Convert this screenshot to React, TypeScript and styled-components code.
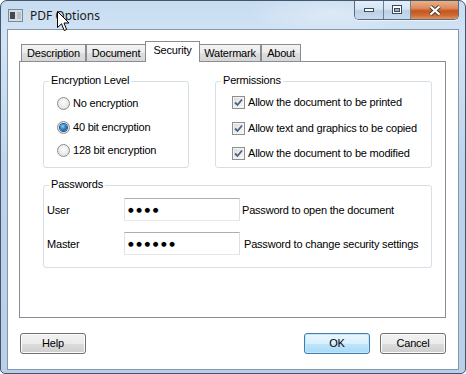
import React from "react";
import styled, { createGlobalStyle } from "styled-components";

const Global = createGlobalStyle`
  html, body { margin: 0; padding: 0; width: 466px; height: 374px; overflow: hidden; background: #ffffff; }
  body { font-family: "Liberation Sans", Arial, sans-serif; font-size: 11px; letter-spacing: -0.2px; color: #000; }
  * { box-sizing: border-box; }
`;

const Window = styled.div`
  position: relative;
  width: 466px;
  height: 374px;
  border: 1px solid #44566a;
  border-radius: 7px 7px 5px 5px;
  background:
    radial-gradient(ellipse 120px 30px at 330px 12px, rgba(255,255,255,0.35), rgba(255,255,255,0) 70%),
    linear-gradient(180deg, #c7dcf1 0%, #d3e4f5 10%, #bcd3eb 45%, #b9d0e8 100%);
  padding: 0 6px 3px 6px;
  display: flex;
  flex-direction: column;
  overflow: hidden;
`;

const TitleBar = styled.div`
  height: 28px;
  display: flex;
  align-items: flex-start;
  flex-shrink: 0;
`;

const AppIcon = styled.svg`
  margin: 8px 0 0 1px;
  flex-shrink: 0;
`;

const Title = styled.div`
  margin: 6px 0 0 7px;
  font-family: "Noto Sans", "Open Sans", sans-serif;
  font-size: 12px;
  letter-spacing: 0;
  line-height: 17px;
  color: #1a1a1a;
  flex: 1;
`;

const Caption = styled.div`
  display: flex;
  height: 19px;
  border: 1px solid #5a6b7e;
  border-top: none;
  border-radius: 0 0 5px 5px;
  overflow: hidden;
  box-shadow: 0 1px 0 rgba(255,255,255,0.6);
`;

const CapButton = styled.div<{ $w: number; $close?: boolean }>`
  width: ${(p) => p.$w}px;
  height: 100%;
  display: flex;
  align-items: center;
  justify-content: center;
  border-left: ${(p) => (p.$close ? "1px solid #6b4a3a" : "none")};
  & + & { border-left: 1px solid #6d7e92; }
  background: ${(p) =>
    p.$close
      ? "linear-gradient(180deg, #e9b08a 0%, #dd8c5c 40%, #c2561f 55%, #cf6c34 80%, #e09460 100%)"
      : "linear-gradient(180deg, #e4eef9 0%, #d6e4f3 45%, #bccfe5 55%, #c9dbee 100%)"};
`;

const Client = styled.div`
  flex: 1;
  border: 1px solid #8496ab;
  background: #ffffff;
  padding: 11px 0 0 11px;
  display: flex;
  flex-direction: column;
`;

const TabControl = styled.div`
  width: 427px;
  display: flex;
  flex-direction: column;
`;

const TabStrip = styled.div`
  display: flex;
  align-items: flex-end;
  height: 20px;
  padding-left: 2px;
`;

const Tab = styled.div<{ $w: number; $active?: boolean }>`
  position: relative;
  width: ${(p) => p.$w}px;
  height: ${(p) => (p.$active ? 21 : 18)}px;
  margin: ${(p) => (p.$active ? "0 -1px -1px -1px" : "0 0 -1px 0")};
  z-index: ${(p) => (p.$active ? 1 : 0)};
  border: 1px solid #898c95;
  border-bottom: ${(p) => (p.$active ? "none" : "1px solid #898c95")};
  background: ${(p) =>
    p.$active ? "#ffffff" : "linear-gradient(180deg, #f3f3f3 0%, #ebebeb 50%, #dedede 51%, #d6d6d6 100%)"};
  display: flex;
  align-items: center;
  justify-content: center;
  padding-bottom: ${(p) => (p.$active ? 3 : 0)}px;
  line-height: 13px;
  white-space: nowrap;
`;

const Panel = styled.div`
  height: 257px;
  border: 1px solid #898c95;
  background: #ffffff;
  padding: 19px 0 0 23px;
`;

const GroupRow = styled.div`
  display: flex;
  gap: 26px;
`;

const Group = styled.div<{ $w: number; $h: number; $mt?: number }>`
  position: relative;
  width: ${(p) => p.$w}px;
  height: ${(p) => p.$h}px;
  margin-top: ${(p) => p.$mt ?? 0}px;
  border: 1px solid #d5dfe5;
  border-radius: 3px;
`;

const Legend = styled.div`
  position: absolute;
  top: -8px;
  left: 5px;
  padding: 0 2px;
  background: #ffffff;
  line-height: 13px;
`;

const OptionList = styled.div<{ $pt: number; $pl: number; $rh: number }>`
  padding: ${(p) => p.$pt}px 0 0 ${(p) => p.$pl}px;
  display: grid;
  grid-auto-rows: ${(p) => p.$rh}px;
`;

const Option = styled.div`
  display: flex;
  align-items: center;
  gap: 3px;
  line-height: 13px;
  white-space: nowrap;
`;

const RadioCircle = styled.span<{ $on?: boolean }>`
  width: 13px;
  height: 13px;
  border-radius: 50%;
  border: 1px solid #8c8e90;
  background: radial-gradient(circle at 50% 40%, #fdfdfd 0%, #e8e8e8 60%, #d2d2d2 100%);
  display: flex;
  align-items: center;
  justify-content: center;
  flex-shrink: 0;
  &::after {
    content: "";
    display: ${(p) => (p.$on ? "block" : "none")};
    width: 7px;
    height: 7px;
    border-radius: 50%;
    background: radial-gradient(circle at 40% 35%, #8fd0ff 0%, #2f7fc4 45%, #123e72 100%);
    box-shadow: 0 0 0 1px #1d4f86;
  }
`;

const CheckBox = styled.span`
  width: 13px;
  height: 13px;
  border: 1px solid #8f8f8f;
  background: linear-gradient(135deg, #d8d8d8 0%, #ececec 50%, #fafafa 100%);
  box-shadow: inset 0 0 0 1px #f4f4f4;
  display: flex;
  align-items: center;
  justify-content: center;
  flex-shrink: 0;
`;

const PwGrid = styled.div`
  padding: 12px 0 0 3px;
  display: grid;
  grid-template-columns: 77px 116px auto;
  row-gap: 11px;
  align-items: center;
`;

const TextBox = styled.div`
  height: 23px;
  border: 1px solid;
  border-color: #abadb3 #dbdfe6 #e3e9ef #e2e3ea;
  padding-left: 3px;
  display: flex;
  align-items: center;
  font-family: "DejaVu Sans", sans-serif;
  font-size: 6.5px;
  letter-spacing: 2.6px;
  color: #000;
`;

const Hint = styled.div<{ $ml: number }>`
  margin-left: ${(p) => p.$ml}px;
  white-space: nowrap;
`;

const ButtonRow = styled.div`
  margin: 15px 0 0 1px;
  width: 426px;
  display: flex;
  gap: 10px;
`;

const Spacer = styled.div`
  flex: 1;
`;

const Button = styled.div<{ $default?: boolean }>`
  width: 66px;
  height: 21px;
  border: 1px solid ${(p) => (p.$default ? "#3c7fb1" : "#707070")};
  border-radius: 3px;
  background: ${(p) =>
    p.$default
      ? "linear-gradient(180deg, #eaf6fd 0%, #d9f0fc 50%, #bee6fd 51%, #a7d9f5 100%)"
      : "linear-gradient(180deg, #f2f2f2 0%, #ebebeb 50%, #dddddd 51%, #cfcfcf 100%)"};
  box-shadow: inset 0 0 0 1px ${(p) => (p.$default ? "#c5e6f8" : "#fcfcfc")};
  display: flex;
  align-items: center;
  justify-content: center;
  line-height: 13px;
`;

const Cursor = styled.svg`
  position: absolute;
  left: 56px;
  top: 10px;
`;

const CheckMark = () => (
  <svg width="9" height="9" viewBox="0 0 9 9">
    <path d="M1 4.5 L3.5 7 L8 1.5" fill="none" stroke="#4d6185" strokeWidth="1.8" />
  </svg>
);

export default function App() {
  return (
    <>
      <Global />
      <Window>
        <TitleBar>
          <AppIcon width="15" height="13" viewBox="0 0 15 13">
            <rect x="0.5" y="0.5" width="14" height="12" fill="#d7dde3" stroke="#7d8790" />
            <rect x="2" y="3" width="5" height="7" fill="#3f4a56" />
            <rect x="9" y="3" width="4" height="7" fill="#b9c1c9" />
          </AppIcon>
          <Title>PDF Options</Title>
          <Caption>
            <CapButton $w={28}>
              <svg width="12" height="6" viewBox="0 0 12 6">
                <rect x="1.5" y="1.5" width="9" height="3" fill="#ffffff" stroke="#3b4a5c" />
              </svg>
            </CapButton>
            <CapButton $w={27}>
              <svg width="12" height="10" viewBox="0 0 12 10">
                <rect x="1.5" y="0.5" width="9" height="8" fill="#ffffff" stroke="#3b4a5c" />
                <rect x="3.5" y="3.5" width="5" height="3" fill="#9bb0c8" stroke="#3b4a5c" />
              </svg>
            </CapButton>
            <CapButton $w={48} $close>
              <svg width="14" height="11" viewBox="0 0 14 11">
                <path d="M2.5 1.5 L11.5 9.5 M11.5 1.5 L2.5 9.5" stroke="#4a3a33" strokeWidth="4" />
                <path d="M2.5 1.5 L11.5 9.5 M11.5 1.5 L2.5 9.5" stroke="#ffffff" strokeWidth="2.2" />
              </svg>
            </CapButton>
          </Caption>
        </TitleBar>
        <Client>
          <TabControl>
            <TabStrip>
              <Tab $w={65}>Description</Tab>
              <Tab $w={60}>Document</Tab>
              <Tab $w={55} $active>Security</Tab>
              <Tab $w={62}>Watermark</Tab>
              <Tab $w={40}>About</Tab>
            </TabStrip>
            <Panel>
              <GroupRow>
                <Group $w={146} $h={87}>
                  <Legend>Encryption Level</Legend>
                  <OptionList $pt={10} $pl={13} $rh={23.5}>
                    <Option><RadioCircle />No encryption</Option>
                    <Option><RadioCircle $on />40 bit encryption</Option>
                    <Option><RadioCircle />128 bit encryption</Option>
                  </OptionList>
                </Group>
                <Group $w={217} $h={87}>
                  <Legend>Permissions</Legend>
                  <OptionList $pt={8} $pl={16} $rh={25.5}>
                    <Option><CheckBox><CheckMark /></CheckBox>Allow the document to be printed</Option>
                    <Option><CheckBox><CheckMark /></CheckBox>Allow text and graphics to be copied</Option>
                    <Option><CheckBox><CheckMark /></CheckBox>Allow the document to be modified</Option>
                  </OptionList>
                </Group>
              </GroupRow>
              <Group $w={389} $h={83} $mt={17}>
                <Legend>Passwords</Legend>
                <PwGrid>
                  <div>User</div>
                  <TextBox>●●●●</TextBox>
                  <Hint $ml={2}>Password to open the document</Hint>
                  <div>Master</div>
                  <TextBox>●●●●●●</TextBox>
                  <Hint $ml={4}>Password to change security settings</Hint>
                </PwGrid>
              </Group>
            </Panel>
          </TabControl>
          <ButtonRow>
            <Button>Help</Button>
            <Spacer />
            <Button $default>OK</Button>
            <Button>Cancel</Button>
          </ButtonRow>
        </Client>
        <Cursor width="14" height="21" viewBox="0 0 14 21">
          <path d="M0.5 0.5 L0.5 16.5 L4.5 12.8 L7.2 19.5 L9.6 18.5 L7 12 L12 12 Z" fill="#ffffff" stroke="#000000" strokeWidth="1" strokeLinejoin="miter" />
        </Cursor>
      </Window>
    </>
  );
}
